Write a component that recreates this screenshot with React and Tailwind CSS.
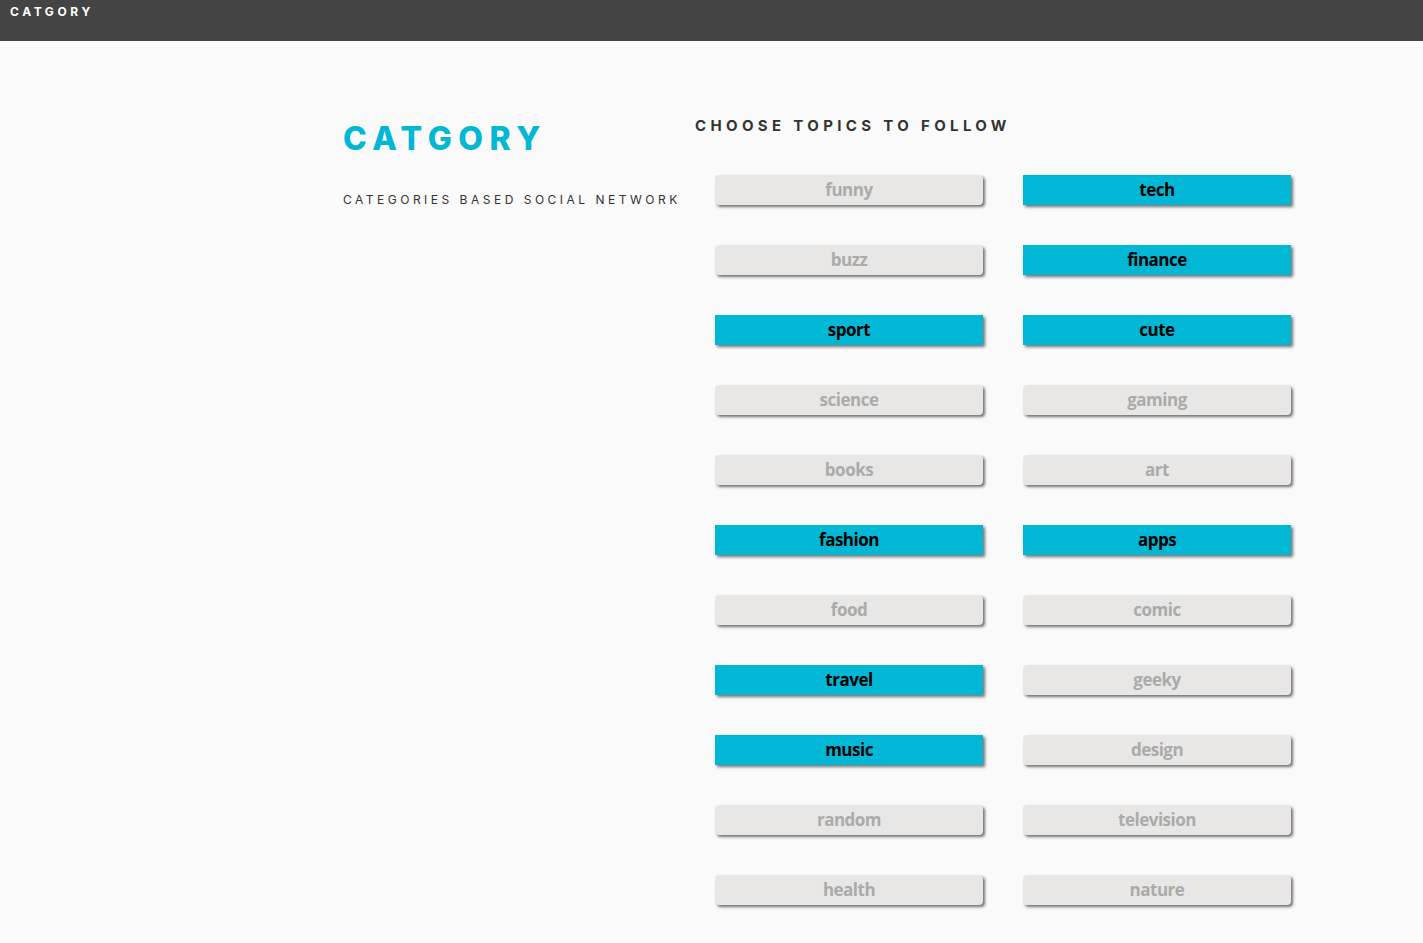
const topics = [
  ['funny', false], ['tech', true],
  ['buzz', false], ['finance', true],
  ['sport', true], ['cute', true],
  ['science', false], ['gaming', false],
  ['books', false], ['art', false],
  ['fashion', true], ['apps', true],
  ['food', false], ['comic', false],
  ['travel', true], ['geeky', false],
  ['music', true], ['design', false],
  ['random', false], ['television', false],
  ['health', false], ['nature', false],
];

function Topic({ name, active }) {
  return (
    <button
      className={
        active
          ? 'h-[30px] w-[268px] bg-[#00b7d5] text-black text-[17px] font-bold shadow-[2px_2px_3px_rgba(0,0,0,0.55)]'
          : 'h-[30px] w-[268px] rounded-[4px] bg-[#e8e7e5] text-[#ababab] text-[17px] font-bold shadow-[2px_2px_3px_rgba(0,0,0,0.55)]'
      }
      style={{ fontFamily: '"Open Sans", sans-serif', letterSpacing: '-0.5px' }}
    >
      {name}
    </button>
  );
}

export default function App() {
  return (
    <div className="min-h-[943px] bg-[#fafafa]">
      <nav className="h-[41px] bg-[#444444] px-[10px]">
        <span
          className="block text-[12px] font-bold leading-[24px] tracking-[3.6px] text-white"
          style={{ fontFamily: 'Inter, sans-serif' }}
        >
          CATGORY
        </span>
      </nav>

      <main className="flex pl-[343px] pt-[75px]">
        <div className="w-[352px]">
          <h1
            className="text-[32px] font-extrabold leading-[46px] tracking-[6.5px] text-[#00b7d5]"
            style={{ fontFamily: 'Inter, sans-serif' }}
          >
            CATGORY
          </h1>
          <p
            className="mt-[29px] text-[12px] tracking-[3.5px] text-[#333]"
            style={{ fontFamily: 'Inter, sans-serif' }}
          >
            CATEGORIES BASED SOCIAL NETWORK
          </p>
        </div>

        <div>
          <h2
            className="text-[15px] font-bold leading-[20px] tracking-[4.35px] text-[#333]"
            style={{ fontFamily: 'Inter, sans-serif' }}
          >
            CHOOSE TOPICS TO FOLLOW
          </h2>
          <div className="mt-[39px] grid grid-cols-[268px_268px] gap-x-[40px] gap-y-[40px] pl-[20px]">
            {topics.map(([name, active]) => (
              <Topic key={name} name={name} active={active} />
            ))}
          </div>
        </div>
      </main>
    </div>
  );
}
